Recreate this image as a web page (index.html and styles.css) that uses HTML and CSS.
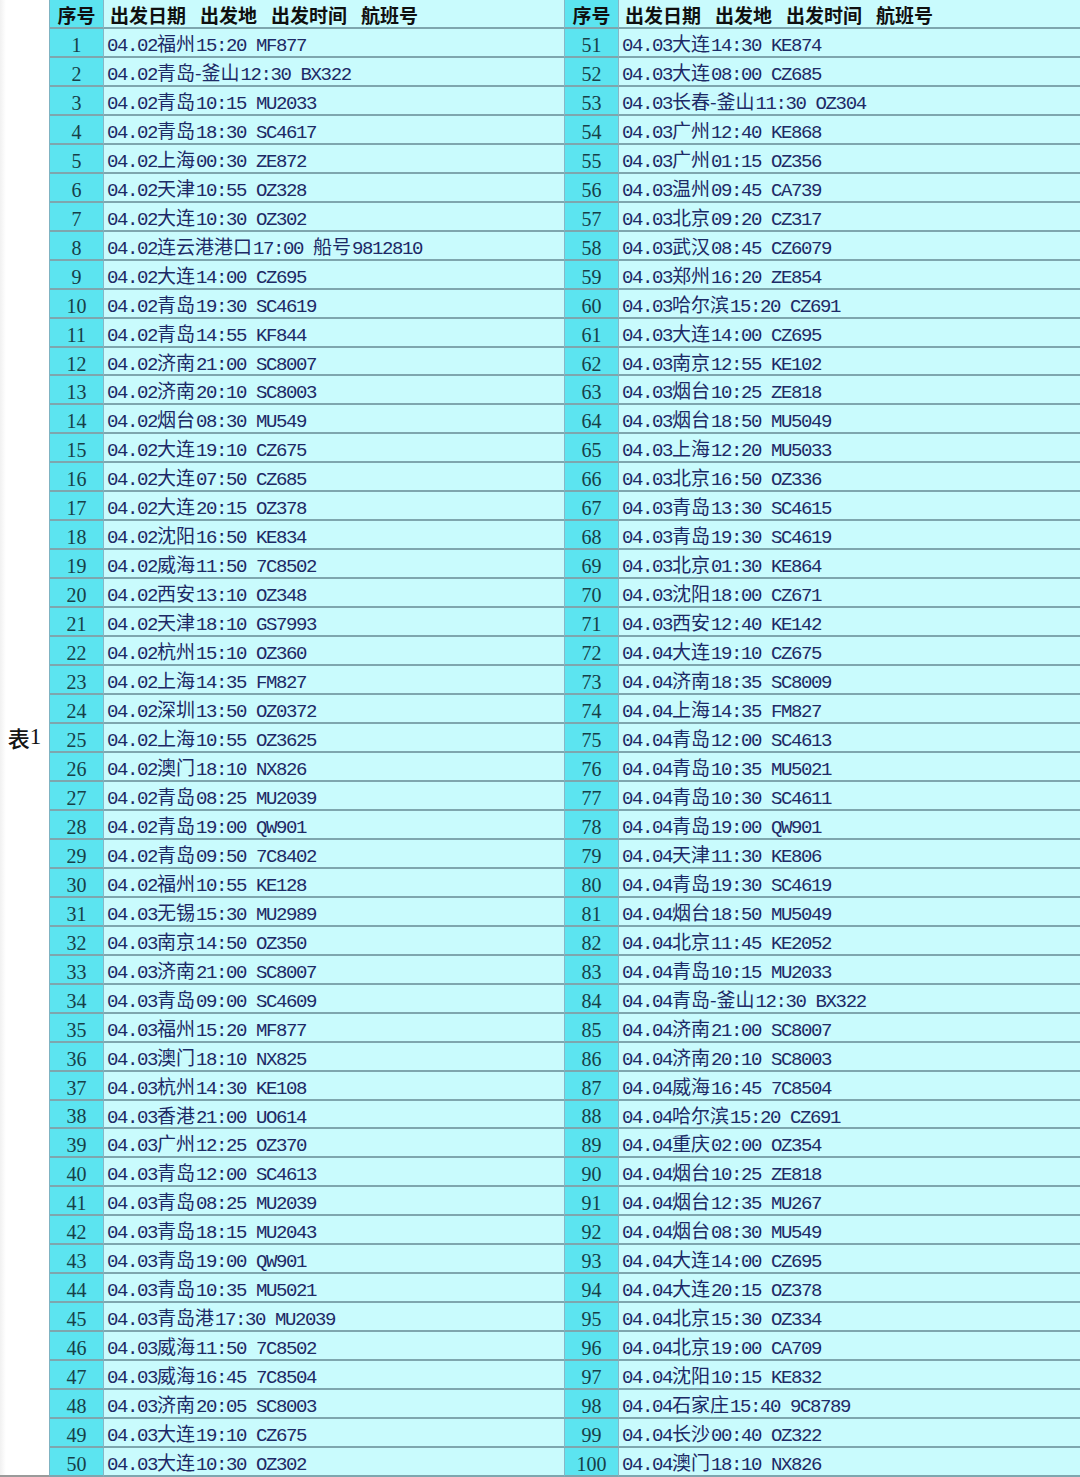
FILE: index.html
```html
<!DOCTYPE html>
<html lang="zh">
<head>
<meta charset="utf-8">
<title>表1</title>
<link rel="stylesheet" href="styles.css">
</head>
<body>
<div class="page">
  <div class="label"><span class="lz">表</span><span class="ld">1</span></div>
  <div class="sheet">
    <div class="n h">序号</div><div class="t h"><span>出发日期</span><span>出发地</span><span>出发时间</span><span>航班号</span></div>
    <div class="n h">序号</div><div class="t h"><span>出发日期</span><span>出发地</span><span>出发时间</span><span>航班号</span></div>

    <div class="n">1</div><div class="t">04.02<span class="z">福州</span>15:20 MF877</div>
    <div class="n">51</div><div class="t">04.03<span class="z">大连</span>14:30 KE874</div>
    <div class="n">2</div><div class="t">04.02<span class="z">青岛-釜山</span>12:30 BX322</div>
    <div class="n">52</div><div class="t">04.03<span class="z">大连</span>08:00 CZ685</div>
    <div class="n">3</div><div class="t">04.02<span class="z">青岛</span>10:15 MU2033</div>
    <div class="n">53</div><div class="t">04.03<span class="z">长春-釜山</span>11:30 OZ304</div>
    <div class="n">4</div><div class="t">04.02<span class="z">青岛</span>18:30 SC4617</div>
    <div class="n">54</div><div class="t">04.03<span class="z">广州</span>12:40 KE868</div>
    <div class="n">5</div><div class="t">04.02<span class="z">上海</span>00:30 ZE872</div>
    <div class="n">55</div><div class="t">04.03<span class="z">广州</span>01:15 OZ356</div>
    <div class="n">6</div><div class="t">04.02<span class="z">天津</span>10:55 OZ328</div>
    <div class="n">56</div><div class="t">04.03<span class="z">温州</span>09:45 CA739</div>
    <div class="n">7</div><div class="t">04.02<span class="z">大连</span>10:30 OZ302</div>
    <div class="n">57</div><div class="t">04.03<span class="z">北京</span>09:20 CZ317</div>
    <div class="n">8</div><div class="t">04.02<span class="z">连云港港口</span>17:00 <span class="z">船号</span>9812810</div>
    <div class="n">58</div><div class="t">04.03<span class="z">武汉</span>08:45 CZ6079</div>
    <div class="n">9</div><div class="t">04.02<span class="z">大连</span>14:00 CZ695</div>
    <div class="n">59</div><div class="t">04.03<span class="z">郑州</span>16:20 ZE854</div>
    <div class="n">10</div><div class="t">04.02<span class="z">青岛</span>19:30 SC4619</div>
    <div class="n">60</div><div class="t">04.03<span class="z">哈尔滨</span>15:20 CZ691</div>
    <div class="n">11</div><div class="t">04.02<span class="z">青岛</span>14:55 KF844</div>
    <div class="n">61</div><div class="t">04.03<span class="z">大连</span>14:00 CZ695</div>
    <div class="n">12</div><div class="t">04.02<span class="z">济南</span>21:00 SC8007</div>
    <div class="n">62</div><div class="t">04.03<span class="z">南京</span>12:55 KE102</div>
    <div class="n">13</div><div class="t">04.02<span class="z">济南</span>20:10 SC8003</div>
    <div class="n">63</div><div class="t">04.03<span class="z">烟台</span>10:25 ZE818</div>
    <div class="n">14</div><div class="t">04.02<span class="z">烟台</span>08:30 MU549</div>
    <div class="n">64</div><div class="t">04.03<span class="z">烟台</span>18:50 MU5049</div>
    <div class="n">15</div><div class="t">04.02<span class="z">大连</span>19:10 CZ675</div>
    <div class="n">65</div><div class="t">04.03<span class="z">上海</span>12:20 MU5033</div>
    <div class="n">16</div><div class="t">04.02<span class="z">大连</span>07:50 CZ685</div>
    <div class="n">66</div><div class="t">04.03<span class="z">北京</span>16:50 OZ336</div>
    <div class="n">17</div><div class="t">04.02<span class="z">大连</span>20:15 OZ378</div>
    <div class="n">67</div><div class="t">04.03<span class="z">青岛</span>13:30 SC4615</div>
    <div class="n">18</div><div class="t">04.02<span class="z">沈阳</span>16:50 KE834</div>
    <div class="n">68</div><div class="t">04.03<span class="z">青岛</span>19:30 SC4619</div>
    <div class="n">19</div><div class="t">04.02<span class="z">威海</span>11:50 7C8502</div>
    <div class="n">69</div><div class="t">04.03<span class="z">北京</span>01:30 KE864</div>
    <div class="n">20</div><div class="t">04.02<span class="z">西安</span>13:10 OZ348</div>
    <div class="n">70</div><div class="t">04.03<span class="z">沈阳</span>18:00 CZ671</div>
    <div class="n">21</div><div class="t">04.02<span class="z">天津</span>18:10 GS7993</div>
    <div class="n">71</div><div class="t">04.03<span class="z">西安</span>12:40 KE142</div>
    <div class="n">22</div><div class="t">04.02<span class="z">杭州</span>15:10 OZ360</div>
    <div class="n">72</div><div class="t">04.04<span class="z">大连</span>19:10 CZ675</div>
    <div class="n">23</div><div class="t">04.02<span class="z">上海</span>14:35 FM827</div>
    <div class="n">73</div><div class="t">04.04<span class="z">济南</span>18:35 SC8009</div>
    <div class="n">24</div><div class="t">04.02<span class="z">深圳</span>13:50 OZ0372</div>
    <div class="n">74</div><div class="t">04.04<span class="z">上海</span>14:35 FM827</div>
    <div class="n">25</div><div class="t">04.02<span class="z">上海</span>10:55 OZ3625</div>
    <div class="n">75</div><div class="t">04.04<span class="z">青岛</span>12:00 SC4613</div>
    <div class="n">26</div><div class="t">04.02<span class="z">澳门</span>18:10 NX826</div>
    <div class="n">76</div><div class="t">04.04<span class="z">青岛</span>10:35 MU5021</div>
    <div class="n">27</div><div class="t">04.02<span class="z">青岛</span>08:25 MU2039</div>
    <div class="n">77</div><div class="t">04.04<span class="z">青岛</span>10:30 SC4611</div>
    <div class="n">28</div><div class="t">04.02<span class="z">青岛</span>19:00 QW901</div>
    <div class="n">78</div><div class="t">04.04<span class="z">青岛</span>19:00 QW901</div>
    <div class="n">29</div><div class="t">04.02<span class="z">青岛</span>09:50 7C8402</div>
    <div class="n">79</div><div class="t">04.04<span class="z">天津</span>11:30 KE806</div>
    <div class="n">30</div><div class="t">04.02<span class="z">福州</span>10:55 KE128</div>
    <div class="n">80</div><div class="t">04.04<span class="z">青岛</span>19:30 SC4619</div>
    <div class="n">31</div><div class="t">04.03<span class="z">无锡</span>15:30 MU2989</div>
    <div class="n">81</div><div class="t">04.04<span class="z">烟台</span>18:50 MU5049</div>
    <div class="n">32</div><div class="t">04.03<span class="z">南京</span>14:50 OZ350</div>
    <div class="n">82</div><div class="t">04.04<span class="z">北京</span>11:45 KE2052</div>
    <div class="n">33</div><div class="t">04.03<span class="z">济南</span>21:00 SC8007</div>
    <div class="n">83</div><div class="t">04.04<span class="z">青岛</span>10:15 MU2033</div>
    <div class="n">34</div><div class="t">04.03<span class="z">青岛</span>09:00 SC4609</div>
    <div class="n">84</div><div class="t">04.04<span class="z">青岛-釜山</span>12:30 BX322</div>
    <div class="n">35</div><div class="t">04.03<span class="z">福州</span>15:20 MF877</div>
    <div class="n">85</div><div class="t">04.04<span class="z">济南</span>21:00 SC8007</div>
    <div class="n">36</div><div class="t">04.03<span class="z">澳门</span>18:10 NX825</div>
    <div class="n">86</div><div class="t">04.04<span class="z">济南</span>20:10 SC8003</div>
    <div class="n">37</div><div class="t">04.03<span class="z">杭州</span>14:30 KE108</div>
    <div class="n">87</div><div class="t">04.04<span class="z">威海</span>16:45 7C8504</div>
    <div class="n">38</div><div class="t">04.03<span class="z">香港</span>21:00 UO614</div>
    <div class="n">88</div><div class="t">04.04<span class="z">哈尔滨</span>15:20 CZ691</div>
    <div class="n">39</div><div class="t">04.03<span class="z">广州</span>12:25 OZ370</div>
    <div class="n">89</div><div class="t">04.04<span class="z">重庆</span>02:00 OZ354</div>
    <div class="n">40</div><div class="t">04.03<span class="z">青岛</span>12:00 SC4613</div>
    <div class="n">90</div><div class="t">04.04<span class="z">烟台</span>10:25 ZE818</div>
    <div class="n">41</div><div class="t">04.03<span class="z">青岛</span>08:25 MU2039</div>
    <div class="n">91</div><div class="t">04.04<span class="z">烟台</span>12:35 MU267</div>
    <div class="n">42</div><div class="t">04.03<span class="z">青岛</span>18:15 MU2043</div>
    <div class="n">92</div><div class="t">04.04<span class="z">烟台</span>08:30 MU549</div>
    <div class="n">43</div><div class="t">04.03<span class="z">青岛</span>19:00 QW901</div>
    <div class="n">93</div><div class="t">04.04<span class="z">大连</span>14:00 CZ695</div>
    <div class="n">44</div><div class="t">04.03<span class="z">青岛</span>10:35 MU5021</div>
    <div class="n">94</div><div class="t">04.04<span class="z">大连</span>20:15 OZ378</div>
    <div class="n">45</div><div class="t">04.03<span class="z">青岛港</span>17:30 MU2039</div>
    <div class="n">95</div><div class="t">04.04<span class="z">北京</span>15:30 OZ334</div>
    <div class="n">46</div><div class="t">04.03<span class="z">威海</span>11:50 7C8502</div>
    <div class="n">96</div><div class="t">04.04<span class="z">北京</span>19:00 CA709</div>
    <div class="n">47</div><div class="t">04.03<span class="z">威海</span>16:45 7C8504</div>
    <div class="n">97</div><div class="t">04.04<span class="z">沈阳</span>10:15 KE832</div>
    <div class="n">48</div><div class="t">04.03<span class="z">济南</span>20:05 SC8003</div>
    <div class="n">98</div><div class="t">04.04<span class="z">石家庄</span>15:40 9C8789</div>
    <div class="n">49</div><div class="t">04.03<span class="z">大连</span>19:10 CZ675</div>
    <div class="n">99</div><div class="t">04.04<span class="z">长沙</span>00:40 OZ322</div>
    <div class="n">50</div><div class="t">04.03<span class="z">大连</span>10:30 OZ302</div>
    <div class="n">100</div><div class="t">04.04<span class="z">澳门</span>18:10 NX826</div>
  </div>
</div>
</body>
</html>
```

FILE: styles.css
```css
html, body {
  margin: 0;
  padding: 0;
  background: #ffffff;
}

.page {
  display: flex;
  width: 1080px;
  height: 1477px;
  overflow: hidden;
}

.label {
  flex: none;
  width: 50px;
  box-sizing: border-box;
  display: flex;
  align-items: center;
  justify-content: center;
  padding-bottom: 2px;
  border-right: 1px solid #7fb3c2;
  border-bottom: 2px solid #9a9a9a;
  background: linear-gradient(to right, #f1f1f1 0, #ffffff 6px);
  color: #141414;
}

.lz {
  font-family: "Noto Sans CJK SC", sans-serif;
  font-size: 22px;
  font-weight: 500;
}

.ld {
  font-family: "Liberation Serif", serif;
  font-size: 23px;
}

.sheet {
  flex: 1;
  display: grid;
  grid-template-columns: 54px 461px 54px 461px;
  grid-template-rows: repeat(51, minmax(0, 1fr));
  height: 1477px;
}

.n,
.t {
  border-bottom: 2px solid #7ea6ae;
  box-sizing: border-box;
  white-space: nowrap;
  overflow: hidden;
}

.n {
  display: flex;
  align-items: center;
  justify-content: center;
  padding-top: 5px;
  background: #5ce4f0;
  border-right: 1px solid #86b7c6;
  font-family: "Liberation Serif", serif;
  font-size: 20px;
  line-height: 1;
  color: #173f48;
}

.t {
  display: block;
  background: #c9fbfd;
  padding-left: 3px;
  padding-top: 1px;
  line-height: 25px;
  font-family: "Liberation Mono", monospace;
  font-size: 19px;
  letter-spacing: -1.4px;
  color: #1d2a66;
}

.t:nth-child(4n + 2) {
  border-right: 1px solid #86b7c6;
}

.t .z {
  font-family: "Noto Sans CJK SC", sans-serif;
  font-size: 19px;
  letter-spacing: 0;
  margin-right: 1px;
}

.h {
  font-family: "Noto Sans CJK SC", sans-serif;
  font-weight: 700;
  font-size: 19px;
  color: #101010;
  letter-spacing: 0;
}

.n.h {
  padding-top: 2px;
}

.t.h {
  display: flex;
  align-items: center;
  gap: 14px;
  padding-left: 6px;
  padding-top: 2px;
  line-height: 1;
}
```
